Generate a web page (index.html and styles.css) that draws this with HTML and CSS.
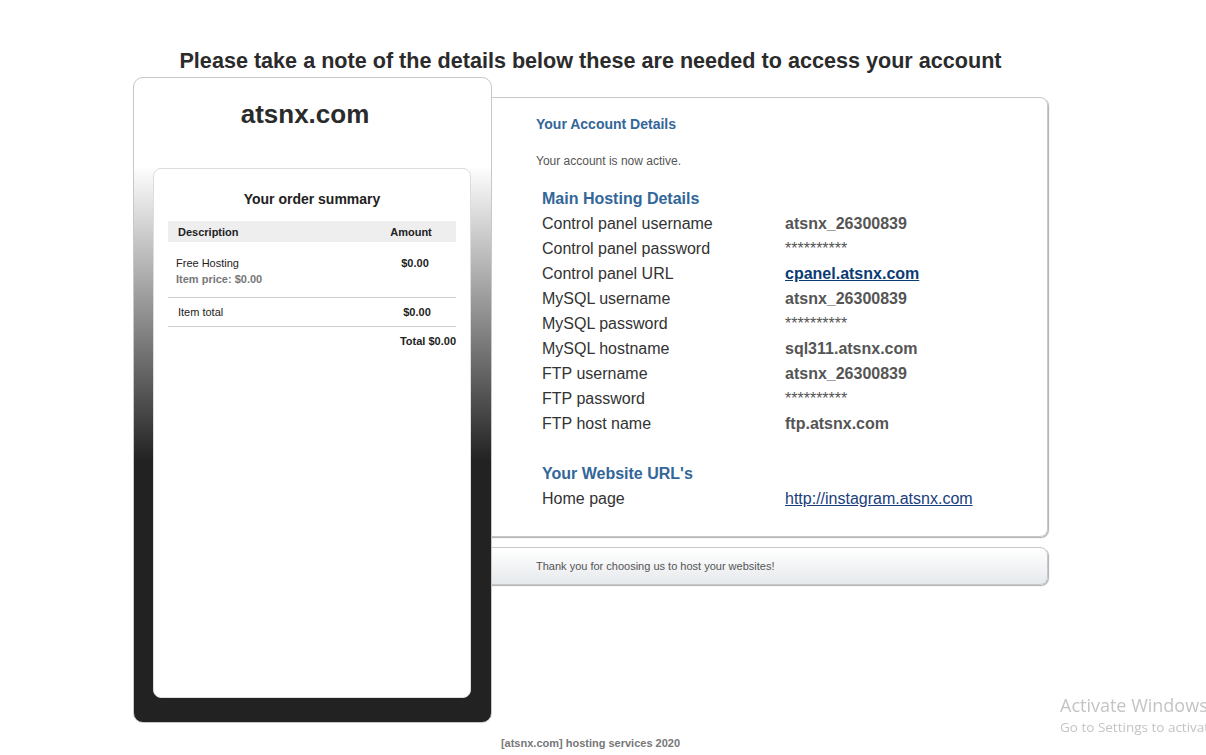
FILE: index.html
```html
<!DOCTYPE html>
<html lang="en">
<head>
<meta charset="utf-8">
<title>Account details</title>
<link rel="stylesheet" href="styles.css">
</head>
<body>
<div class="page">
  <h1 class="title">Please take a note of the details below these are needed to access your account</h1>
  <div class="main">
    <div class="panel">
      <div class="site">atsnx.com</div>
      <div class="card">
        <div class="card-title">Your order summary</div>
        <div class="order">
          <div class="order-head">
            <span class="col-desc">Description</span>
            <span class="col-amt">Amount</span>
          </div>
          <div class="order-item">
            <div class="col-desc item-desc">
              <div class="item-name">Free Hosting</div>
              <div class="item-price">Item price: $0.00</div>
            </div>
            <div class="col-amt amt item-amt">$0.00</div>
          </div>
          <div class="order-sub">
            <span class="col-desc sub-label">Item total</span>
            <span class="col-amt amt sub-amt">$0.00</span>
          </div>
          <div class="order-total">Total $0.00</div>
        </div>
      </div>
    </div>
    <div class="right">
      <div class="box">
        <div class="box-title">Your Account Details</div>
        <div class="active">Your account is now active.</div>
        <div class="details">
          <div class="section">Main Hosting Details</div>
          <div class="row"><span class="label">Control panel username</span><span class="value">atsnx_26300839</span></div>
          <div class="row"><span class="label">Control panel password</span><span class="value stars">**********</span></div>
          <div class="row"><span class="label">Control panel URL</span><a class="value link-bold" href="#">cpanel.atsnx.com</a></div>
          <div class="row"><span class="label">MySQL username</span><span class="value">atsnx_26300839</span></div>
          <div class="row"><span class="label">MySQL password</span><span class="value stars">**********</span></div>
          <div class="row"><span class="label">MySQL hostname</span><span class="value">sql311.atsnx.com</span></div>
          <div class="row"><span class="label">FTP username</span><span class="value">atsnx_26300839</span></div>
          <div class="row"><span class="label">FTP password</span><span class="value stars">**********</span></div>
          <div class="row"><span class="label">FTP host name</span><span class="value">ftp.atsnx.com</span></div>
          <div class="row blank"></div>
          <div class="section">Your Website URL's</div>
          <div class="row"><span class="label">Home page</span><a class="value link" href="#">http://instagram.atsnx.com</a></div>
        </div>
      </div>
      <div class="thanks">Thank you for choosing us to host your websites!</div>
    </div>
  </div>
  <div class="footer">[atsnx.com] hosting services 2020</div>
</div>
<div class="watermark">
  <div class="wm-big">Activate Windows</div>
  <div class="wm-small">Go to Settings to activate Windows.</div>
</div>
</body>
</html>
```

FILE: styles.css
```css
html, body {
  margin: 0;
  padding: 0;
  background: #fff;
  overflow: hidden;
}
body {
  font-family: "Liberation Sans", Arial, sans-serif;
  color: #333;
  width: 1206px;
  height: 755px;
}
.page {
  width: 915px;
  margin-left: 133px;
}
.title {
  margin: 0 -60px;
  padding-top: 48px;
  height: 29px;
  font-size: 21.6px;
  line-height: 26px;
  font-weight: bold;
  color: #2b2b2b;
  text-align: center;
  white-space: nowrap;
}
.main {
  display: flex;
  align-items: flex-start;
}
.panel {
  position: relative;
  z-index: 1;
  box-sizing: border-box;
  width: 359px;
  height: 646px;
  flex: none;
  border: 1px solid #c8c8c8;
  border-radius: 10px;
  background: linear-gradient(to bottom, #fff 88px, #222 383px);
  padding: 21px 20px 0 19px;
}
.site {
  font-size: 26px;
  font-weight: bold;
  line-height: 31px;
  text-align: center;
  color: #2b2b2b;
  margin-bottom: 38px;
  padding-right: 14px;
}
.card {
  box-sizing: border-box;
  width: 318px;
  height: 530px;
  background: #fff;
  border: 1px solid #ddd;
  border-radius: 8px;
  padding: 21px 14px 0 14px;
}
.card-title {
  font-size: 14px;
  font-weight: bold;
  color: #222;
  text-align: center;
  line-height: 18px;
  margin-bottom: 13px;
}
.order {
  font-size: 11px;
  color: #222;
}
.order-head {
  display: flex;
  background: #eee;
  height: 21px;
  align-items: center;
  font-weight: bold;
}
.col-desc {
  flex: 1;
  padding-left: 10px;
}
.col-amt {
  box-sizing: border-box;
  width: 90px;
  flex: none;
  text-align: center;
}
.order-item {
  display: flex;
  padding: 14px 0 9px;
  border-bottom: 1px solid #ccc;
}
.item-desc {
  padding-left: 8px;
}
.item-name {
  line-height: 15px;
}
.item-price {
  line-height: 17px;
  color: #777;
  font-weight: bold;
}
.amt {
  font-weight: bold;
  line-height: 15px;
}
.item-amt {
  padding-left: 8px;
}
.order-sub {
  display: flex;
  height: 28px;
  align-items: center;
  border-bottom: 1px solid #ccc;
}
.sub-label {
  color: #222;
}
.sub-amt {
  padding-left: 12px;
}
.order-total {
  text-align: right;
  font-weight: bold;
  line-height: 28px;
}
.right {
  margin-left: -32px;
  margin-top: 20px;
  width: 588px;
  flex: none;
}
.box {
  box-sizing: border-box;
  height: 440px;
  border: 1px solid #c8c8c8;
  border-radius: 8px;
  box-shadow: 1px 1px 1px #b0b0b0;
  padding: 17px 0 0 75px;
}
.box-title {
  font-size: 14px;
  font-weight: bold;
  color: #336699;
  line-height: 18px;
}
.active {
  font-size: 12px;
  color: #555;
  margin-top: 20px;
  line-height: 16px;
}
.details {
  padding-left: 6px;
  margin-top: 17px;
}
.section {
  font-size: 16px;
  font-weight: bold;
  color: #336699;
  line-height: 25px;
}
.row {
  display: flex;
  height: 25px;
  line-height: 25px;
  font-size: 16px;
}
.label {
  width: 243px;
  color: #333;
}
.value {
  font-weight: bold;
  color: #555;
}
.stars {
  font-size: 16px;
  font-weight: normal;
}
.link-bold {
  color: #0b3b73;
  text-decoration: underline;
}
.link {
  font-weight: normal;
  color: #1a3d7c;
  text-decoration: underline;
}
.thanks {
  box-sizing: border-box;
  height: 38px;
  margin-top: 10px;
  border: 1px solid #c8c8c8;
  border-radius: 8px;
  box-shadow: 1px 1px 1px #b0b0b0;
  background: linear-gradient(to bottom, #fff, #e6e9ec);
  font-size: 11px;
  color: #555;
  line-height: 36px;
  padding-left: 75px;
}
.footer {
  text-align: center;
  font-size: 11px;
  font-weight: bold;
  color: #777;
  margin-top: 13px;
  line-height: 14px;
}
.watermark {
  position: fixed;
  left: 1060px;
  top: 693px;
  white-space: nowrap;
  font-family: "Open Sans", "Noto Sans", sans-serif;
  color: #c4c4c4;
}
.wm-big {
  font-size: 18px;
  line-height: 24px;
}
.wm-small {
  font-size: 13.5px;
  line-height: 20px;
}
```
